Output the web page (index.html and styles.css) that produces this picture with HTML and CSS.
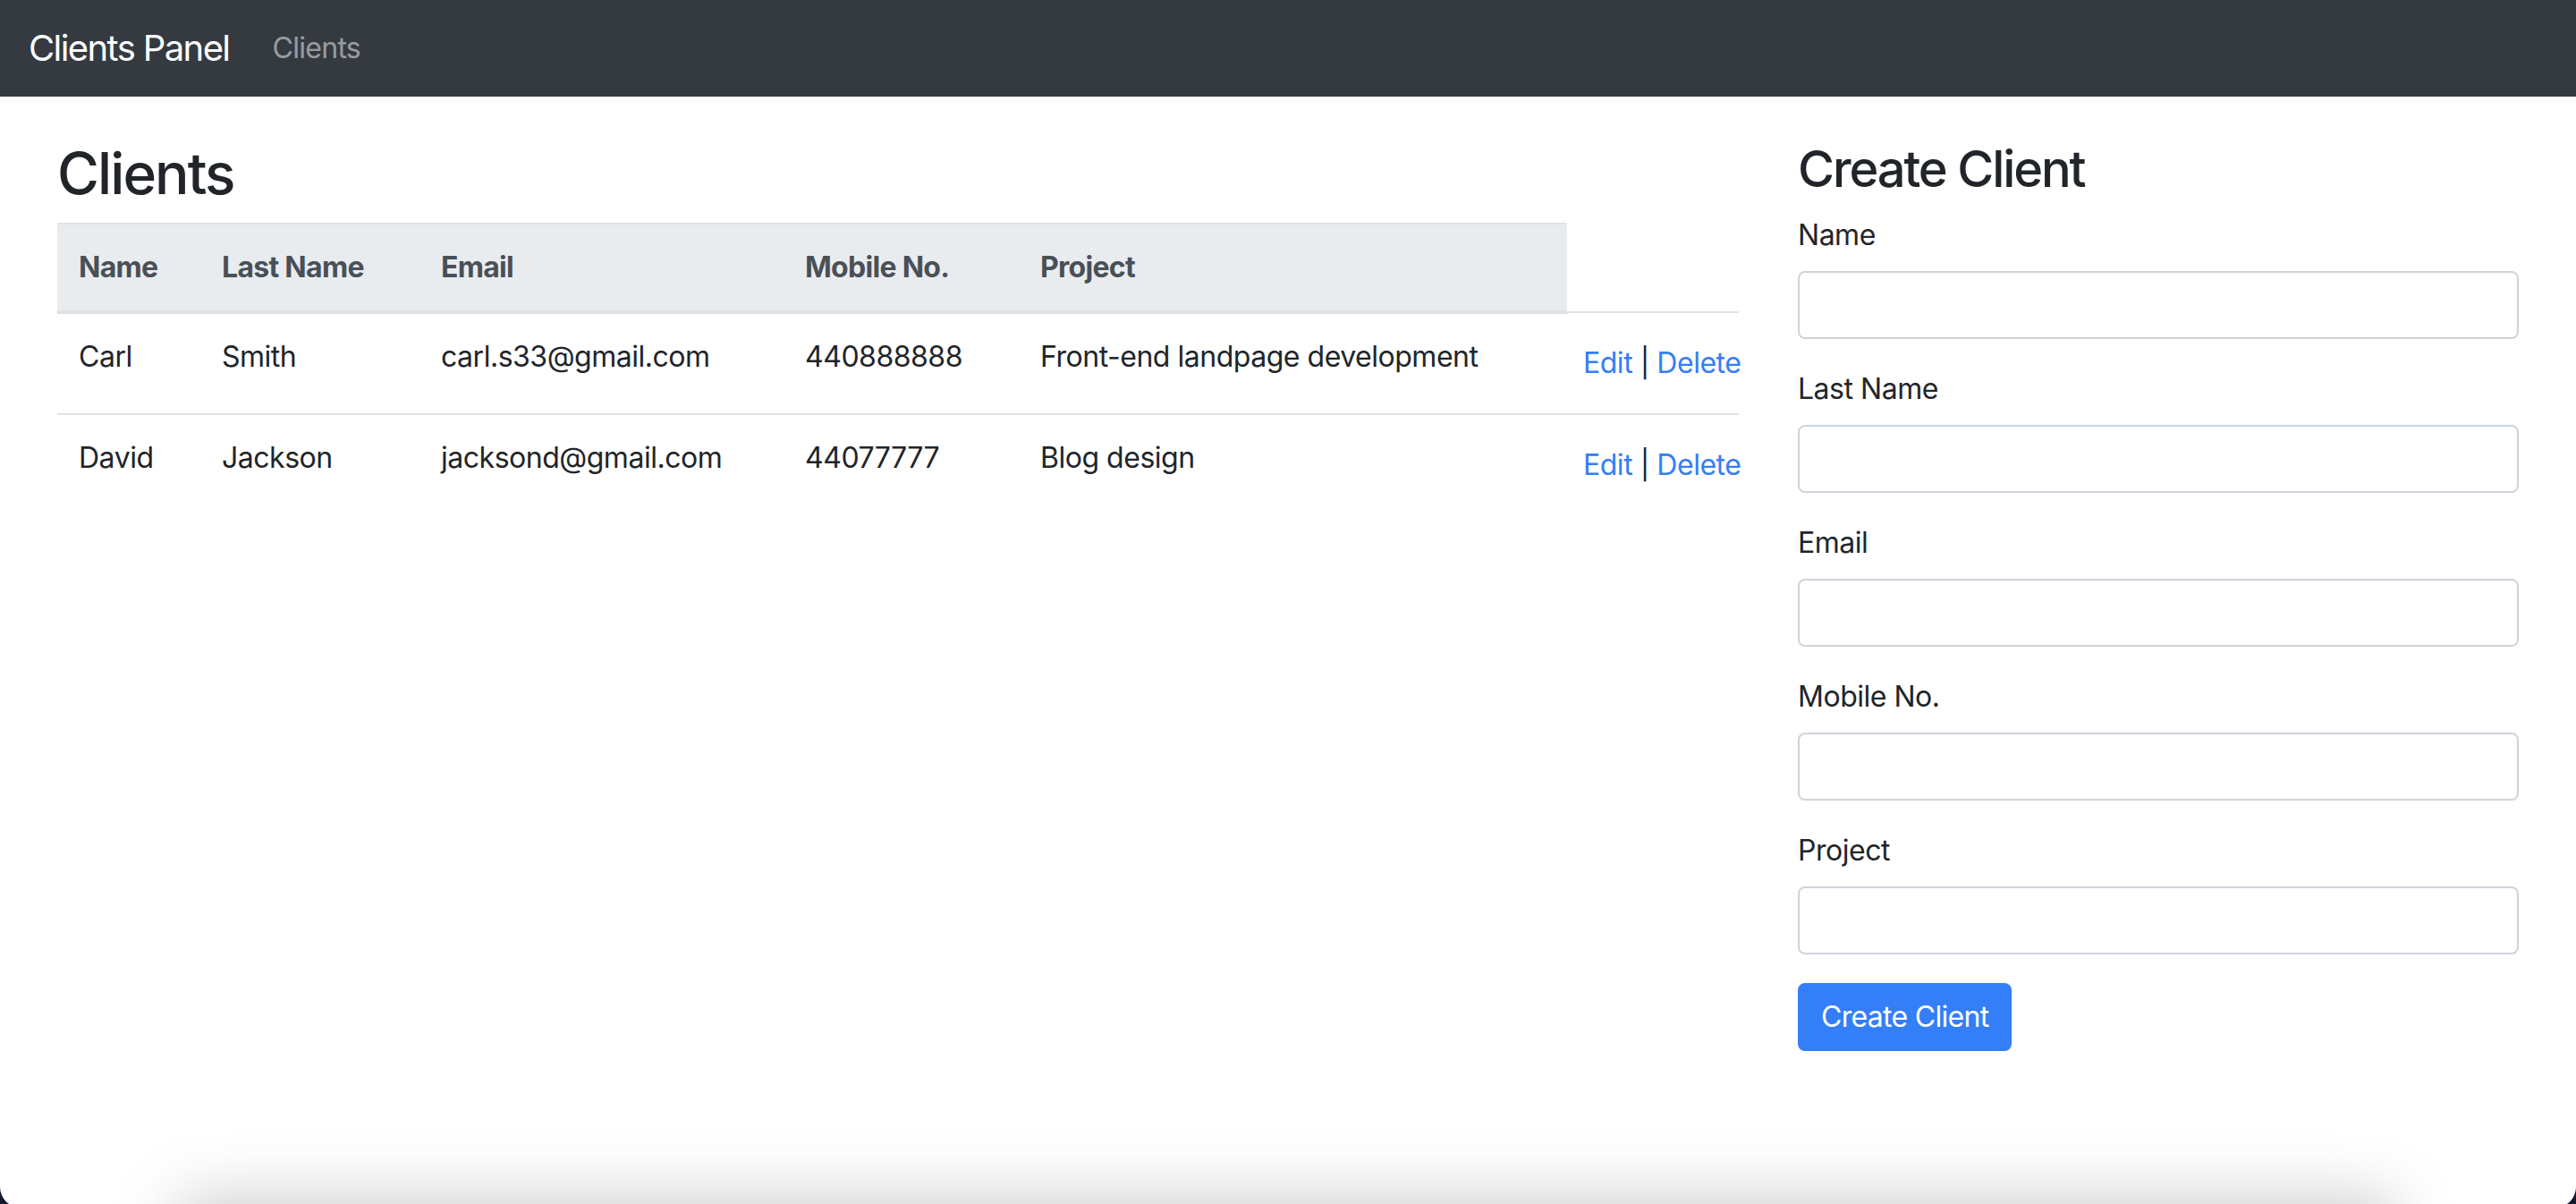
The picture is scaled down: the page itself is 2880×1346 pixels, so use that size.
FILE: index.html
```html
<!DOCTYPE html>
<html lang="en">
<head>
<meta charset="utf-8">
<title>Clients Panel</title>
<link rel="stylesheet" href="styles.css">
</head>
<body>
<div class="window">
  <nav class="navbar">
    <a class="brand" href="#">Clients Panel</a>
    <a class="nav-link" href="#">Clients</a>
  </nav>
  <main class="content">
    <section class="list">
      <h2 class="list-title">Clients</h2>
      <table class="table">
        <colgroup>
          <col class="c-name"><col class="c-last"><col class="c-email"><col class="c-mobile"><col class="c-project"><col class="c-actions">
        </colgroup>
        <thead>
          <tr>
            <th>Name</th><th>Last Name</th><th>Email</th><th>Mobile No.</th><th>Project</th>
          </tr>
        </thead>
        <tbody>
          <tr>
            <td>Carl</td><td>Smith</td><td>carl.s33@gmail.com</td><td>440888888</td><td>Front-end landpage development</td>
            <td class="actions"><a href="#">Edit</a> | <a href="#">Delete</a></td>
          </tr>
          <tr>
            <td>David</td><td>Jackson</td><td>jacksond@gmail.com</td><td>44077777</td><td>Blog design</td>
            <td class="actions"><a href="#">Edit</a> | <a href="#">Delete</a></td>
          </tr>
        </tbody>
      </table>
    </section>
    <section class="create">
      <h3 class="create-title">Create Client</h3>
      <form class="form">
        <div class="form-group"><label class="label">Name</label><input class="input" type="text"></div>
        <div class="form-group"><label class="label">Last Name</label><input class="input" type="text"></div>
        <div class="form-group"><label class="label">Email</label><input class="input" type="text"></div>
        <div class="form-group"><label class="label">Mobile No.</label><input class="input" type="text"></div>
        <div class="form-group"><label class="label">Project</label><input class="input" type="text"></div>
        <button class="btn" type="button">Create Client</button>
      </form>
    </section>
  </main>
  <div class="dock-shadow"></div>
</div>
</body>
</html>
```
FILE: styles.css
```css
html, body {
  margin: 0;
  height: 100%;
  overflow: hidden;
  background: #131a2d;
}
.window {
  position: relative;
  height: 1350px;
  background: #fff;
  border-radius: 0 0 23px 23px;
  overflow: hidden;
  font-family: Inter, "Noto Sans", sans-serif;
  letter-spacing: -0.03em;
  color: #212529;
}
.navbar {
  height: 108px;
  box-sizing: border-box;
  background: #343a40;
  display: flex;
  align-items: center;
  padding: 0 32px;
}
.brand {
  font-size: 40px;
  letter-spacing: -0.04em;
  color: #fff;
  text-decoration: none;
  margin-right: 32px;
  line-height: 60px;
}
.nav-link {
  font-size: 32px;
  letter-spacing: -0.022em;
  color: rgba(255,255,255,.5);
  text-decoration: none;
  padding: 0 16px;
  line-height: 48px;
}
.content {
  display: grid;
  grid-template-columns: 1880px 806px;
  column-gap: 66px;
  padding: 48px 64px 0;
}
.list-title {
  font-size: 64px;
  font-weight: 500;
  letter-spacing: -0.03em;
  line-height: 1.2;
  margin: 0 0 16px;
}
.create-title {
  font-size: 56px;
  font-weight: 500;
  letter-spacing: -0.038em;
  line-height: 1.2;
  margin: 0 0 16px;
}
.table {
  width: 1880px;
  table-layout: fixed;
  border-collapse: collapse;
  font-size: 32px;
}
.c-name { width: 160px; }
.c-last { width: 245px; }
.c-email { width: 407px; }
.c-mobile { width: 263px; }
.c-project { width: 613px; }
.c-actions { width: 192px; }
.table th, .table td {
  padding: 24px;
  line-height: 48px;
  text-align: left;
  vertical-align: top;
}
.table th {
  background: #e9ecef;
  color: #495057;
  font-weight: 700;
  letter-spacing: -0.022em;
  border-top: 2px solid #dee2e6;
  border-bottom: 4px solid #dee2e6;
}
.table td {
  border-top: 2px solid #dee2e6;
  white-space: nowrap;
}
.table td.actions {
  padding: 32px 0 32px 18px;
}
.table a {
  color: #347ef7;
  text-decoration: none;
}
.form-group {
  margin-bottom: 32px;
}
.label {
  display: block;
  font-size: 32px;
  line-height: 48px;
  margin-bottom: 16px;
}
.input {
  display: block;
  width: 100%;
  height: 76px;
  box-sizing: border-box;
  border: 2px solid #ced4da;
  border-radius: 8px;
  padding: 12px 24px;
  font-size: 32px;
  font-family: inherit;
  background: #fff;
}
.btn {
  font-family: inherit;
  font-size: 32px;
  letter-spacing: -0.022em;
  line-height: 48px;
  padding: 12px 24px;
  border: 2px solid #347ef7;
  background: #347ef7;
  color: #fff;
  border-radius: 8px;
}
.dock-shadow {
  position: absolute;
  left: 200px;
  right: 205px;
  top: 1340px;
  height: 200px;
  background: rgba(0,0,0,.2);
  filter: blur(35px);
}
```
